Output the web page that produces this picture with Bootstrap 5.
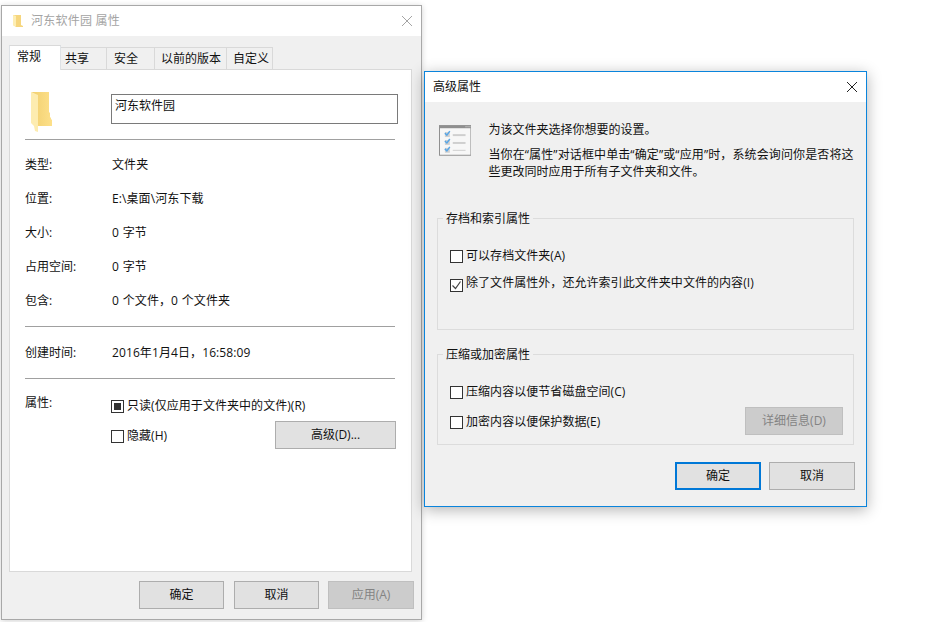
<!DOCTYPE html>
<html lang="zh-CN">
<head>
<meta charset="utf-8">
<title>属性</title>
<link href="https://cdn.jsdelivr.net/npm/bootstrap@5.3.0/dist/css/bootstrap.min.css" rel="stylesheet">
<style>
html,body{height:100%;background:#fff;overflow:hidden}
body{font:12px/16px "Open Sans","Noto Sans CJK SC",sans-serif;color:#111}
.win{position:absolute;background:#f0f0f0;display:flex;flex-direction:column}
.win-a{left:1px;top:5px;width:421px;height:615px;border:1px solid #a8a8a8;box-shadow:0 1px 6px rgba(0,0,0,.18)}
.win-b{left:424px;top:71px;width:443px;height:436px;border:1px solid #0a84dc;box-shadow:0 3px 14px rgba(0,0,0,.3)}
.tbar{background:#fff;height:30px;padding:0 8px;flex:none}
.win-a .tbar{color:#a4a4a4;padding-left:10px}
.win-a .ttl{margin-left:7px;letter-spacing:.02em}
.tabrow{border:0;margin:8px 0 0 7px;height:25px;align-items:flex-end;position:relative;z-index:1}
.tabrow .nav-link{font-size:12px;color:#111;height:22px;padding:3px 0 0 7px;text-align:left;background:#f0f0f0;border:1px solid #d9d9d9;border-bottom:0;border-left-width:0;border-radius:0;margin:0;line-height:16px}
.tabrow .nav-link.active{height:25px;background:#fff;border-left-width:1px;border-top:1px solid #d9d9d9;padding-top:3px;color:#111;padding-left:7px;position:relative;top:1px}
.tw1{width:52px}
.tabrow .tw2{width:46px;padding-left:4px}
.tw3{width:48px}.tw4{width:72px}.tw5{width:46px}
.tabrow .tw4{padding-left:6px}
.tabrow .tw5{padding-left:6px}
.panel{margin:0 9px 0 7px;height:503px;background:#fff;border:1px solid #d9d9d9;padding:0 16px 0 15px}
.headrow{height:69px;align-items:flex-start;padding-top:24px}
.fold{margin-top:-2px;flex:none}
.nmbox{margin-left:58px;width:287px;height:30px;border:1px solid #7a7a7a;padding:3px 3px;flex:none}
.rule{margin:0;border:0;border-top:1px solid #a0a0a0;opacity:1;width:370px}
.info{height:34px;align-items:center}
.lab{width:87px;flex:none}
.val{letter-spacing:.1px;word-spacing:.5px}
.cb{width:13px;height:13px;border:1px solid #333;background:#fff;flex:none;display:flex;align-items:center;justify-content:center;margin-right:3px}
.cb i{width:7px;height:7px;background:#333;display:block}
.opt{align-items:center;margin:0;letter-spacing:.05px}
.wbtn{font-size:12px;line-height:16px;height:28px;padding:0;border:1px solid #adadad;background:#e1e1e1;color:#111;border-radius:0;width:85px;flex:none}
.wbtn:disabled{background:#ccc;border-color:#bfbfbf;color:#838383;opacity:1}
.adv{width:121px;margin-right:-1px}
.foot{padding:9px 7px 0 0;gap:9px;justify-content:flex-end}
.foot .first{margin-right:1px}
.foot .w86{width:86px}
.bbody{padding:0 11px 0 12px}
.intro{padding:23px 0 0 2px;height:116px}
.intro p{margin:0}
.introtxt{margin-left:16px;width:374px;padding-left:1px}
.gbox{position:relative;border:1px solid #dcdcdc;width:417px}
.gtitle{position:absolute;left:5px;top:-8px;background:#f0f0f0;padding:0 3px}
.g1{height:112px;padding:29px 0 0 12px;margin-bottom:24px}
.g2{height:91px;padding:29px 0 0 12px}
.g1 .opt{height:16px;margin-bottom:11px}
.g2 .opt{height:16px}
.detail{width:98px;margin-left:auto;margin-right:10px;margin-top:-2px}
.okrow{padding:17px 0 0 0;gap:8px;justify-content:flex-end;width:418px}
.okrow .wbtn{width:86px}
.okrow .dflt{border:2px solid #0078d7}
.attr-date{height:51px;align-items:center}
.attr-lab{margin-top:-3px}
.attr-block{padding-top:19px}
.cbl{margin-left:-1px}
.ro{height:16px}
.hid-row{margin-top:7px}
.hid-txt{position:relative;top:1px}
.ln1{margin-top:-3px!important}
.ln2{margin-top:8px!important;line-height:17px}
.wide{letter-spacing:.12px;white-space:nowrap}
.lowbox{margin-top:4px}
.g2a{margin-bottom:10px}
.g2b{margin-top:-1px}
</style>
</head>
<body>

<section class="win win-a">
  <div class="tbar d-flex align-items-center">
    <svg width="12" height="14" viewBox="0 0 12 14"><path d="M1 1h6l2 0v10l2 1v1H4L1 11z" fill="#f6d67e"/><path d="M1 1l3 1v11l-3-2z" fill="#fdeeb4"/></svg>
    <span class="ttl">河东软件园 属性</span>
    <svg class="ms-auto" width="12" height="12" viewBox="0 0 12 12"><path d="M1 1l10 10M11 1L1 11" stroke="#a4a4a4" stroke-width="1" fill="none"/></svg>
  </div>
  <ul class="nav nav-tabs tabrow">
    <li class="nav-item"><a class="nav-link active tw1" href="#">常规</a></li>
    <li class="nav-item"><a class="nav-link tw2" href="#">共享</a></li>
    <li class="nav-item"><a class="nav-link tw3" href="#">安全</a></li>
    <li class="nav-item"><a class="nav-link tw4" href="#">以前的版本</a></li>
    <li class="nav-item"><a class="nav-link tw5" href="#">自定义</a></li>
  </ul>
  <div class="panel">
    <div class="headrow d-flex">
      <svg class="fold" width="28" height="41" viewBox="0 0 28 41">
        <defs><linearGradient id="fg" x1="0" x2="1" y1="0" y2="0"><stop offset="0" stop-color="#f1cf6f"/><stop offset="1" stop-color="#fde08a"/></linearGradient></defs>
        <path d="M6 0h18v20l1 1v4l1 1v1l1 1v6H13V4z" fill="url(#fg)"/>
        <path d="M6 0l7 3v37l-3-1-1-5-3-3z" fill="#fdecb0"/>
      </svg>
      <div class="nmbox">河东软件园</div>
    </div>
    <hr class="rule">
    <div class="d-flex info mt-2"><span class="lab">类型:</span><span class="val">文件夹</span></div>
    <div class="d-flex info"><span class="lab">位置:</span><span class="val">E:\桌面\河东下载</span></div>
    <div class="d-flex info"><span class="lab">大小:</span><span class="val">0 字节</span></div>
    <div class="d-flex info"><span class="lab">占用空间:</span><span class="val">0 字节</span></div>
    <div class="d-flex info"><span class="lab">包含:</span><span class="val">0 个文件，0 个文件夹</span></div>
    <hr class="rule mt-2">
    <div class="d-flex info attr-date"><span class="lab">创建时间:</span><span class="val">2016年1月4日，16:58:09</span></div>
    <hr class="rule">
    <div class="d-flex attr-block">
      <span class="lab attr-lab">属性:</span>
      <div class="flex-grow-1">
        <label class="d-flex opt ro cbl"><span class="cb"><i></i></span>只读(仅应用于文件夹中的文件)(R)</label>
        <div class="d-flex align-items-center hid-row">
          <label class="d-flex opt cbl hid-txt"><span class="cb"></span>隐藏(H)</label>
          <button type="button" class="btn wbtn adv ms-auto">高级(D)...</button>
        </div>
      </div>
    </div>
  </div>
  <div class="d-flex foot">
    <button type="button" class="btn wbtn first">确定</button>
    <button type="button" class="btn wbtn">取消</button>
    <button type="button" class="btn wbtn w86" disabled>应用(A)</button>
  </div>
</section>

<section class="win win-b">
  <div class="tbar d-flex align-items-center">
    <span>高级属性</span>
    <svg class="ms-auto" width="12" height="12" viewBox="0 0 12 12"><path d="M1 1l10 10M11 1L1 11" stroke="#222" stroke-width="1" fill="none"/></svg>
  </div>
  <div class="bbody">
    <div class="d-flex intro">
      <svg width="33" height="31" viewBox="0 0 33 31">
        <rect x=".5" y=".5" width="32" height="30" fill="#f7f7f7" stroke="#8f8f8f"/>
        <rect x="0" y="0" width="33" height="3" fill="#8f8f8f"/>
        <rect x="27" y="1" width="1" height="1" fill="#ddd"/><rect x="29" y="1" width="1" height="1" fill="#ddd"/><rect x="31" y="1" width="1" height="1" fill="#ddd"/>
        <g fill="#d0d0d0"><rect x="6" y="7" width="5" height="5"/><rect x="6" y="15" width="5" height="5"/><rect x="6" y="23" width="5" height="5"/></g>
        <g fill="none" stroke="#58a6e6" stroke-width="1.5"><path d="M6 8l2 2 3-4"/><path d="M6 16l2 2 3-4"/><path d="M6 24l2 2 3-4"/></g>
        <g fill="#cfcfcf"><rect x="14" y="9" width="13" height="2"/><rect x="14" y="17" width="13" height="2"/><rect x="14" y="25" width="13" height="1"/></g>
      </svg>
      <div class="introtxt">
        <p class="ln1">为该文件夹选择你想要的设置。</p>
        <p class="ln2"><span class="d-block wide">当你在“属性”对话框中单击“确定”或“应用”时，系统会询问你是否将这</span>些更改同时应用于所有子文件夹和文件。</p>
      </div>
    </div>
    <div class="gbox g1">
      <span class="gtitle">存档和索引属性</span>
      <label class="d-flex opt"><span class="cb"></span>可以存档文件夹(A)</label>
      <label class="d-flex opt"><span class="cb lowbox"><svg width="11" height="11" viewBox="0 0 11 11"><path d="M1.5 5.5l3 3 5-7" fill="none" stroke="#444" stroke-width="1.2"/></svg></span>除了文件属性外，还允许索引此文件夹中文件的内容(I)</label>
    </div>
    <div class="gbox g2">
      <span class="gtitle">压缩或加密属性</span>
      <label class="d-flex opt g2a"><span class="cb"></span>压缩内容以便节省磁盘空间(C)</label>
      <div class="d-flex align-items-center g2b">
        <label class="d-flex opt"><span class="cb"></span>加密内容以便保护数据(E)</label>
        <button type="button" class="btn wbtn detail" disabled>详细信息(D)</button>
      </div>
    </div>
    <div class="d-flex okrow">
      <button type="button" class="btn wbtn dflt">确定</button>
      <button type="button" class="btn wbtn">取消</button>
    </div>
  </div>
</section>
</body>
</html>
